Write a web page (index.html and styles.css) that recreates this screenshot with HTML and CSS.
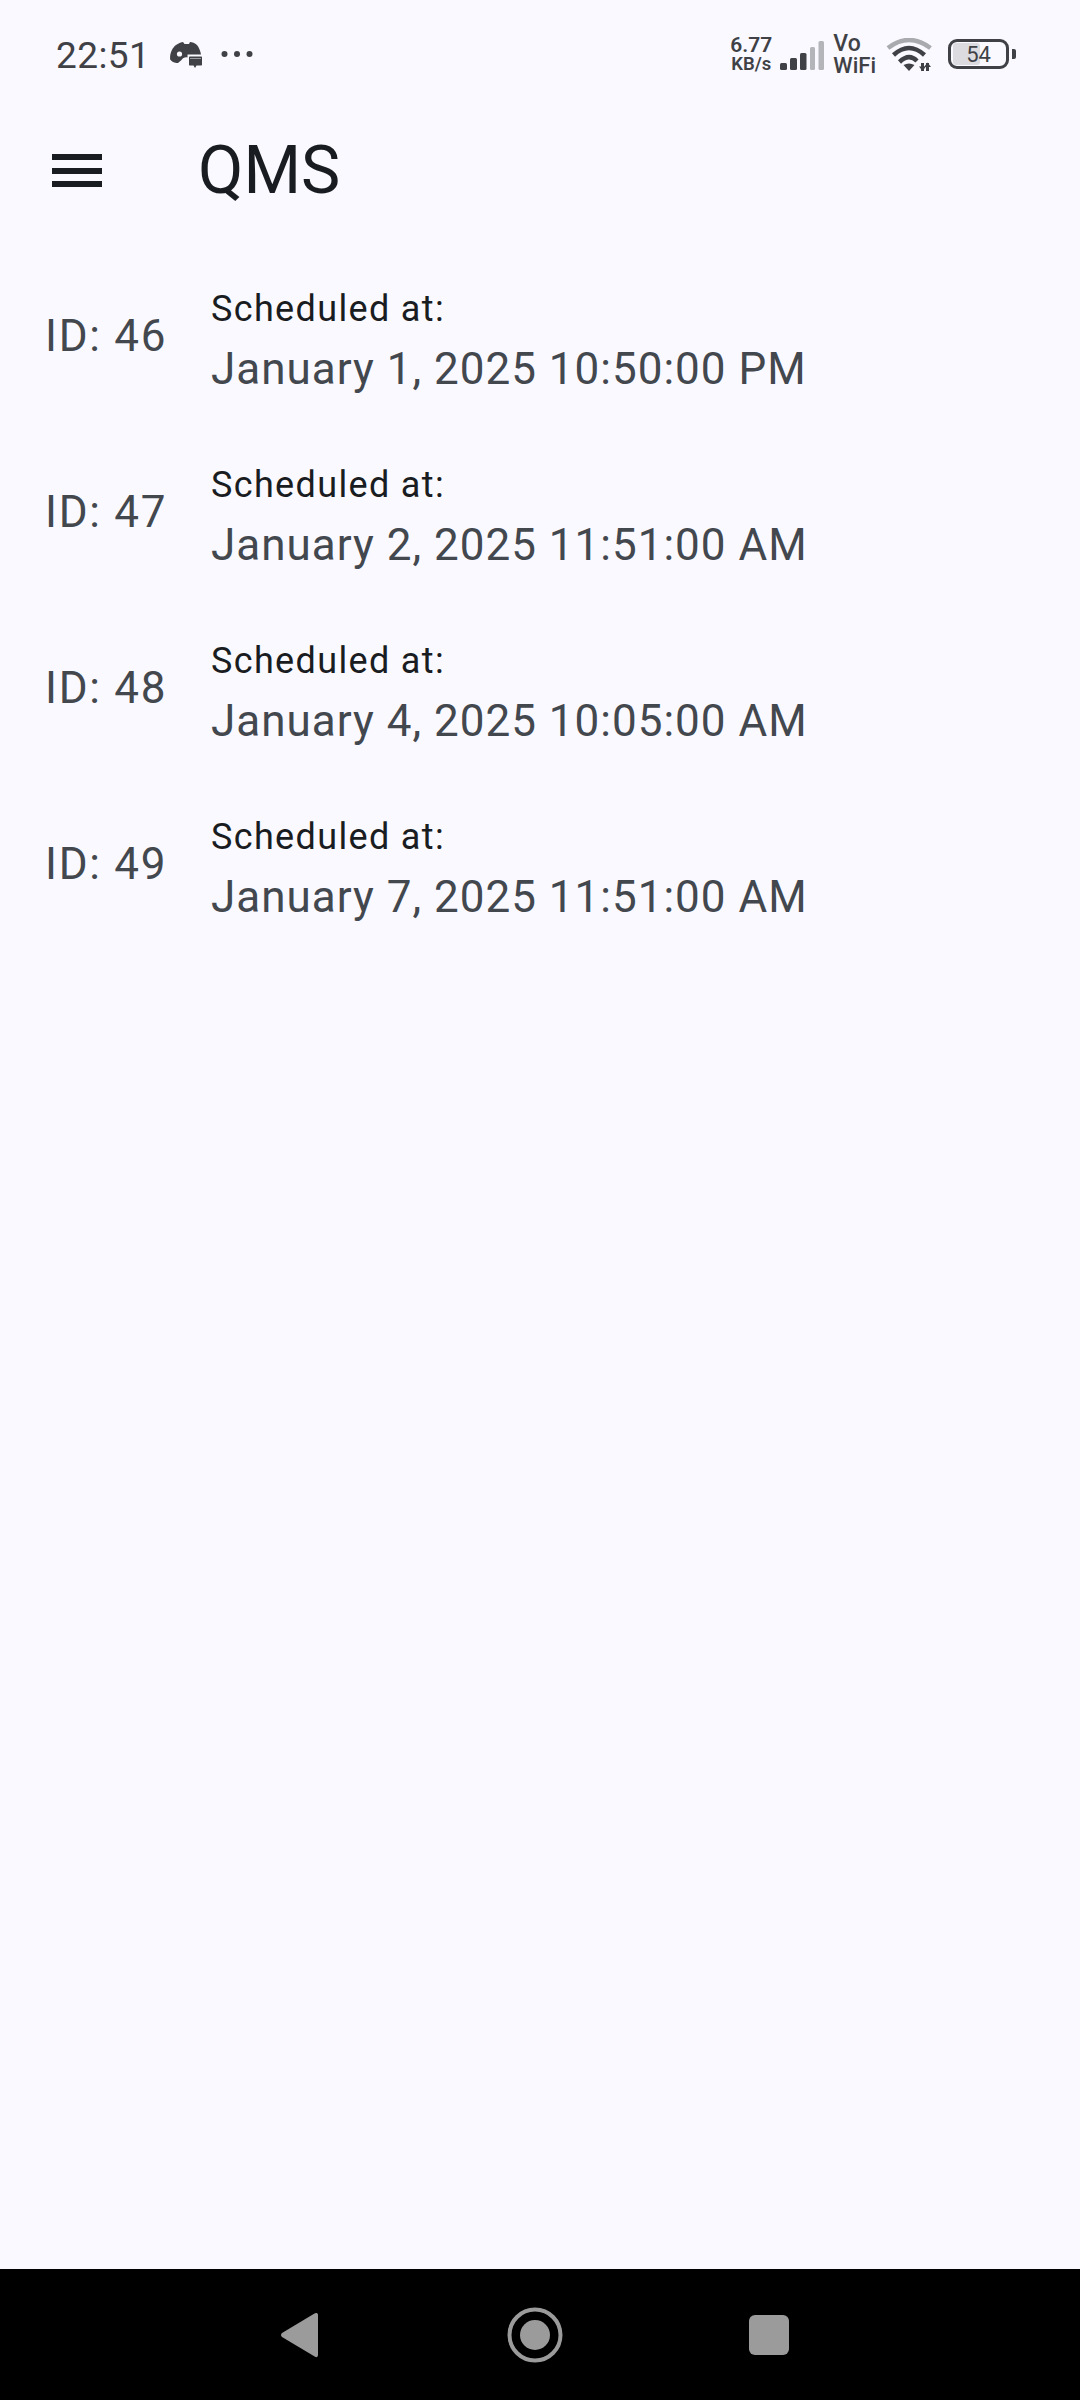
FILE: index.html
```html
<!DOCTYPE html>
<html>
<head>
  <title>QMS</title>
  <meta name="viewport" content="width=device-width, initial-scale=1">
  <link rel="stylesheet" href="styles.css">
</head>

<body>
  <div class="screen">
    <header class="status-bar">
      <div class="status-left">
        <span class="clock">22:51</span>
        <svg class="discord" width="32" height="26" viewBox="0 0 32 26">
          <path fill="#3f4146" d="M6 3C9 1 11.500 .3 13 0l1.500 2h4.500l1-2c2 .3 5 1 7 3 2 2.500 3.500 6 4 9.500H17.500v3c-3-.5-4.500.5-6 2.500L8 21H6.500C3.500 20.500 1 19 .2 17.500-.5 12 2 6 6 3z"/>
          <circle cx="9.500" cy="12" r="2.600" fill="#f9f9ff"/>
          <path fill="#3f4146" d="M20 14.500h11c.6 0 1 .4 1 1v7c0 .6-.4 1-1 1h-4.500L25 26l-1.500-2.500H20c-.6 0-1-.4-1-1v-7c0-.6.4-1 1-1z"/>
          <path stroke="#9a9b9f" stroke-width="1" d="M20 16.500h11"/>
        </svg>
        <svg class="more" width="32" height="8" viewBox="0 0 32 8">
          <circle cx="3.500" cy="4" r="3" fill="#3f4146"/>
          <circle cx="16" cy="4" r="3" fill="#3f4146"/>
          <circle cx="28.500" cy="4" r="3" fill="#3f4146"/>
        </svg>
      </div>
      <div class="status-right">
        <div class="speed"><span class="speed-value">6.77</span><span class="speed-unit">KB/s</span></div>
        <svg class="signal" width="44" height="29" viewBox="0 0 44 29">
          <rect x="0" y="22" width="7" height="7" rx="1.500" fill="#3f4146"/>
          <rect x="10" y="17" width="7" height="12" rx="1.500" fill="#3f4146"/>
          <rect x="20" y="12" width="6.500" height="17" rx="1.500" fill="#3f4146"/>
          <rect x="30" y="6" width="5" height="23" rx="1.500" fill="#b4b5b9"/>
          <rect x="38.500" y="0" width="5.500" height="29" rx="1.500" fill="#b4b5b9"/>
        </svg>
        <div class="vowifi"><span class="vo">Vo</span><span>WiFi</span></div>
        <svg class="wifi" width="46" height="34" viewBox="0 0 46 34">
          <path d="M2 10Q23-6 44.500 10" fill="none" stroke="#a9aaae" stroke-width="4.500"/>
          <path d="M7.500 17Q23 3 38.500 17" fill="none" stroke="#3f4146" stroke-width="4.500"/>
          <path d="M13.500 24Q23 15 31 23" fill="none" stroke="#3f4146" stroke-width="4.500"/>
          <path d="M17.500 27Q23 24 28.500 27L23 33z" fill="#3f4146"/>
          <path d="M36.500 25v8M41.500 33v-8" fill="none" stroke="#3f4146" stroke-width="3"/>
          <path d="M33 28.500h7L36.500 33zM38 29l3.500-4.500L45 29z" fill="#3f4146"/>
        </svg>
        <div class="battery">
          <div class="battery-body"><div class="battery-level"></div><span class="battery-text">54</span></div>
          <div class="battery-cap"></div>
        </div>
      </div>
    </header>

    <div class="app-bar">
      <div class="menu-icon"><i></i><i></i><i></i></div>
      <h1>QMS</h1>
    </div>

    <main class="list">
      <div class="row">
        <div class="row-id">ID: 46</div>
        <div class="row-text">
          <div class="row-label">Scheduled at:</div>
          <div class="row-date">January 1, 2025 10:50:00 PM</div>
        </div>
      </div>
      <div class="row">
        <div class="row-id">ID: 47</div>
        <div class="row-text">
          <div class="row-label">Scheduled at:</div>
          <div class="row-date">January 2, 2025 11:51:00 AM</div>
        </div>
      </div>
      <div class="row">
        <div class="row-id">ID: 48</div>
        <div class="row-text">
          <div class="row-label">Scheduled at:</div>
          <div class="row-date">January 4, 2025 10:05:00 AM</div>
        </div>
      </div>
      <div class="row">
        <div class="row-id">ID: 49</div>
        <div class="row-text">
          <div class="row-label">Scheduled at:</div>
          <div class="row-date">January 7, 2025 11:51:00 AM</div>
        </div>
      </div>
    </main>

    <nav class="nav-bar">
      <svg width="37" height="46" viewBox="0 0 37 46">
        <path fill="#9b9b9b" d="M35 1c1 0 2 .5 2 2v40c0 1.500-1 2.500-2.500 2L1 25c-1.300-1-1.300-3 0-4L33.500 1.500z"/>
      </svg>
      <svg width="56" height="56" viewBox="0 0 56 56">
        <circle cx="28" cy="28" r="25.500" fill="none" stroke="#9b9b9b" stroke-width="4"/>
        <circle cx="28" cy="28" r="15" fill="#9b9b9b"/>
      </svg>
      <div class="nav-square"></div>
    </nav>
  </div>
</body>
</html>
```

FILE: styles.css
```css
html, body {
  margin: 0;
  padding: 0;
}

body {
  font-family: Roboto, sans-serif;
  background: #f9f9ff;
}

.screen {
  width: 1080px;
  height: 2400px;
  display: flex;
  flex-direction: column;
}

.status-bar {
  height: 110px;
  box-sizing: border-box;
  padding: 0 64px 0 56px;
  display: flex;
  justify-content: space-between;
  align-items: center;
  color: #3f4146;
}

.status-left {
  display: flex;
  align-items: center;
}

.clock {
  font-size: 37px;
  letter-spacing: .4px;
}

.discord {
  margin-left: 20px;
}

.more {
  margin-left: 19px;
  margin-bottom: 3px;
}

.status-right {
  display: flex;
  align-items: center;
}

.speed {
  display: flex;
  flex-direction: column;
  align-items: center;
  line-height: 19px;
  font-weight: 600;
}

.speed-value {
  font-size: 21px;
}

.speed-unit {
  font-size: 18.500px;
}

.signal {
  margin-left: 8px;
}

.vowifi {
  display: flex;
  flex-direction: column;
  margin-left: 9px;
  font-size: 22px;
  line-height: 22px;
  font-weight: 500;
}

.vo {
  font-size: 23px;
}

.wifi {
  margin-left: 10px;
}

.battery {
  margin-left: 16px;
  margin-bottom: 2px;
  display: flex;
  align-items: center;
}

.battery-body {
  position: relative;
  box-sizing: border-box;
  width: 61px;
  height: 30px;
  border: 3px solid #3f4146;
  border-radius: 9px;
  display: flex;
  align-items: center;
  justify-content: center;
}

.battery-level {
  position: absolute;
  left: 2px;
  top: 1px;
  bottom: 1px;
  width: 27px;
  background: #dcdce0;
  border-radius: 3px;
}

.battery-text {
  position: relative;
  font-size: 22px;
}

.battery-cap {
  width: 4px;
  height: 10px;
  margin-left: 3px;
  background: #3f4146;
  border-radius: 0 2px 2px 0;
}

.app-bar {
  height: 121px;
  display: flex;
  align-items: center;
  padding-left: 52px;
  color: #191c20;
}

.menu-icon {
  width: 50px;
  display: flex;
  flex-direction: column;
  gap: 7.500px;
}

.menu-icon i {
  display: block;
  height: 6px;
  background: #191c20;
}

.app-bar h1 {
  margin: 0 0 0 96px;
  font-size: 66px;
  font-weight: 400;
}

.list {
  flex: 1;
  padding-top: 25px;
}

.row {
  height: 176px;
  display: flex;
  align-items: center;
  padding-left: 45px;
}

.row-id {
  width: 166px;
  margin-bottom: 16px;
  font-size: 44px;
  letter-spacing: 1.700px;
  color: #43474e;
}

.row-label {
  font-size: 36px;
  letter-spacing: 1.350px;
  line-height: 50px;
  color: #191c20;
}

.row-date {
  font-size: 44px;
  letter-spacing: 1px;
  line-height: 70px;
  color: #43474e;
}

.nav-bar {
  height: 131px;
  background: #000;
  display: grid;
  grid-template-columns: 37px 56px 40px;
  justify-content: start;
  align-items: center;
  column-gap: 189px;
  padding-left: 281px;
}

.nav-square {
  width: 40px;
  height: 40px;
  margin-left: -3px;
  background: #9b9b9b;
  border-radius: 6px;
}
```
